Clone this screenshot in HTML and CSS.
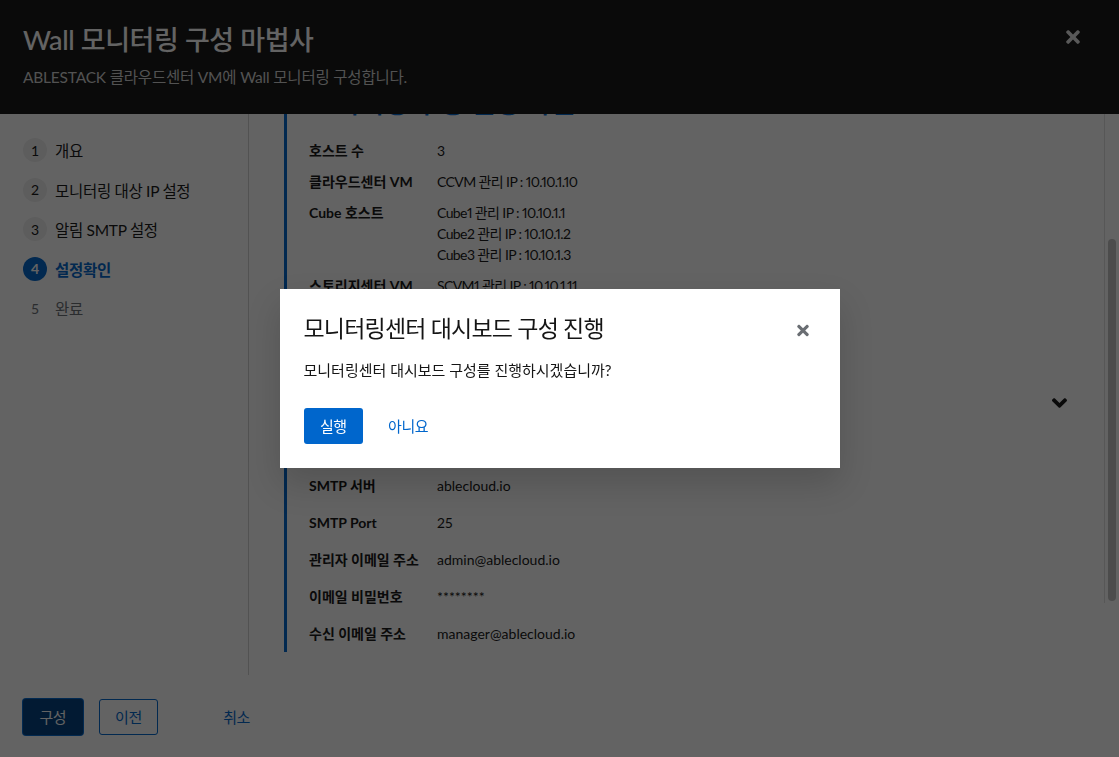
FILE: index.html
```html
<!DOCTYPE html>
<html lang="ko">
<head>
<meta charset="utf-8">
<title>Wall 모니터링 구성 마법사</title>
<link rel="stylesheet" href="styles.css">
</head>
<body>
<div class="wizard">
  <header class="wizard-header">
    <div class="wizard-heading">
      <h1 class="wizard-title">Wall 모니터링 구성 마법사</h1>
      <p class="wizard-desc">ABLESTACK 클라우드센터 VM에 Wall 모니터링 구성합니다.</p>
    </div>
    <button class="wizard-close" aria-label="닫기">
      <svg viewBox="0 0 352 512" width="14" height="20"><path fill="currentColor" d="M242.72 256l100.07-100.07c12.28-12.28 12.28-32.19 0-44.48l-22.24-22.24c-12.28-12.28-32.19-12.28-44.48 0L176 189.28 75.93 89.21c-12.28-12.28-32.19-12.28-44.48 0L9.21 111.45c-12.28 12.28-12.28 32.19 0 44.48L109.28 256 9.21 356.07c-12.28 12.28-12.28 32.19 0 44.48l22.24 22.24c12.28 12.28 32.2 12.28 44.48 0L176 322.72l100.07 100.07c12.28 12.28 32.2 12.28 44.48 0l22.24-22.24c12.28-12.28 12.28-32.19 0-44.48L242.72 256z"/></svg>
    </button>
  </header>

  <div class="wizard-outer">
    <nav class="wizard-nav">
      <ol class="nav-list">
        <li class="nav-item"><span class="nav-num">1</span><span class="nav-text">개요</span></li>
        <li class="nav-item"><span class="nav-num">2</span><span class="nav-text">모니터링 대상 IP 설정</span></li>
        <li class="nav-item"><span class="nav-num">3</span><span class="nav-text">알림 SMTP 설정</span></li>
        <li class="nav-item is-current"><span class="nav-num">4</span><span class="nav-text">설정확인</span></li>
        <li class="nav-item is-disabled"><span class="nav-num">5</span><span class="nav-text">완료</span></li>
      </ol>
    </nav>

    <main class="wizard-main">
      <section class="review">
        <h2 class="review-title">모니터링 구성 설정 확인</h2>
        <dl class="dl dl-compact">
          <dt>호스트 수</dt><dd>3</dd>
          <dt>클라우드센터 VM</dt><dd class="ip">CCVM 관리 IP : 10.10.1.10</dd>
          <dt>Cube 호스트</dt><dd class="ip">Cube1 관리 IP : 10.10.1.1<br>Cube2 관리 IP : 10.10.1.2<br>Cube3 관리 IP : 10.10.1.3</dd>
          <dt>스토리지센터 VM</dt><dd class="ip">SCVM1 관리 IP : 10.10.1.11<br>SCVM2 관리 IP : 10.10.1.12<br>SCVM3 관리 IP : 10.10.1.13</dd>
        </dl>
        <div class="section-toggle">
          <span class="section-toggle-text">알림 SMTP 설정</span>
          <svg class="chevron" viewBox="0 150 320 212" width="15" height="10"><path fill="currentColor" d="M143 352.3L7 216.3c-9.4-9.4-9.4-24.6 0-33.9l22.6-22.6c9.4-9.4 24.6-9.4 33.9 0l96.4 96.4 96.4-96.4c9.4-9.4 24.6-9.4 33.9 0l22.6 22.6c9.4 9.4 9.4 24.6 0 33.9l-136 136c-9.2 9.4-24.4 9.4-33.8 0z"/></svg>
        </div>
        <dl class="dl dl-loose">
          <dt>SMTP 서버</dt><dd>ablecloud.io</dd>
          <dt>SMTP Port</dt><dd>25</dd>
          <dt>관리자 이메일 주소</dt><dd>admin@ablecloud.io</dd>
          <dt>이메일 비밀번호</dt><dd>********</dd>
          <dt>수신 이메일 주소</dt><dd>manager@ablecloud.io</dd>
        </dl>
      </section>
    </main>

    <div class="scrollbar" aria-hidden="true"><div class="scrollbar-thumb"></div></div>
  </div>

  <footer class="wizard-footer">
    <button class="btn btn-primary is-focus">구성</button>
    <button class="btn btn-secondary">이전</button>
    <button class="btn btn-link btn-cancel">취소</button>
  </footer>
</div>

<div class="backdrop">
  <div class="modal" role="dialog" aria-modal="true">
    <div class="modal-header">
      <h2 class="modal-title">모니터링센터 대시보드 구성 진행</h2>
      <button class="modal-close" aria-label="닫기">
        <svg viewBox="0 0 352 512" width="12" height="17"><path fill="currentColor" d="M242.72 256l100.07-100.07c12.28-12.28 12.28-32.19 0-44.48l-22.24-22.24c-12.28-12.28-32.19-12.28-44.48 0L176 189.28 75.93 89.21c-12.28-12.28-32.19-12.28-44.48 0L9.21 111.45c-12.28 12.28-12.28 32.19 0 44.48L109.28 256 9.21 356.070c-12.28 12.28-12.28 32.19 0 44.48l22.24 22.24c12.28 12.28 32.2 12.28 44.48 0L176 322.72l100.07 100.07c12.28 12.28 32.2 12.28 44.48 0l22.24-22.24c12.28-12.28 12.28-32.19 0-44.48L242.72 256z"/></svg>
      </button>
    </div>
    <p class="modal-body">모니터링센터 대시보드 구성를 진행하시겠습니까?</p>
    <div class="modal-footer">
      <button class="btn btn-primary">실행</button>
      <button class="btn btn-link">아니요</button>
    </div>
  </div>
</div>
</body>
</html>
```

FILE: styles.css
```css
* { box-sizing: border-box; }

html, body {
  margin: 0;
  height: 100%;
}

body {
  font-family: "Lato", "Noto Sans CJK KR", sans-serif;
  color: #151515;
  background: #ffffff;
  overflow: hidden;
}

button {
  font-family: inherit;
  cursor: pointer;
}

/* ---------- wizard ---------- */
.wizard {
  display: flex;
  flex-direction: column;
  height: 100vh;
}

.wizard-header {
  flex: none;
  height: 114px;
  background: #151515;
  padding: 24px 39px 0 23px;
  display: flex;
  justify-content: space-between;
  align-items: flex-start;
}

.wizard-title {
  margin: 0;
  font-size: 27px;
  line-height: 32px;
  font-weight: 500;
  letter-spacing: -0.4px;
  color: #ffffff;
}

.wizard-desc {
  margin: 10px 0 0;
  font-size: 15.5px;
  line-height: 22px;
  letter-spacing: -0.2px;
  color: #d2d2d2;
}

.wizard-close {
  margin-top: 3px;
  padding: 0;
  border: 0;
  background: none;
  color: #e4e4e4;
  display: flex;
}

.wizard-outer {
  flex: 1;
  min-height: 0;
  display: flex;
  position: relative;
}

/* nav */
.wizard-nav {
  flex: none;
  width: 249px;
  border-right: 1px solid #d2d2d2;
  padding: 24px 16px 0 23px;
}

.nav-list {
  list-style: none;
  margin: 0;
  padding: 0;
  display: flex;
  flex-direction: column;
  gap: 15.5px;
}

.nav-item {
  display: flex;
  align-items: center;
  gap: 8px;
  height: 24px;
  font-size: 15.5px;
  letter-spacing: -0.3px;
  color: #151515;
}

.nav-num {
  width: 24px;
  height: 24px;
  border-radius: 50%;
  background: #f0f0f0;
  display: flex;
  align-items: center;
  justify-content: center;
  font-size: 14px;
  font-weight: 400;
  letter-spacing: 0;
  color: #151515;
}

.nav-item.is-current {
  color: #0066cc;
  font-weight: 700;
}

.nav-item.is-current .nav-num {
  background: #0066cc;
  color: #ffffff;
  font-weight: 700;
}

.nav-item.is-disabled {
  color: #6a6e73;
}

.nav-item.is-disabled .nav-num {
  background: transparent;
  color: #6a6e73;
}

/* main */
.wizard-main {
  flex: 1;
  min-width: 0;
  overflow: hidden;
  padding: 0 52px 0 35px;
}

.review {
  border-left: 3px solid #0066cc;
  padding: 0 0 8px 22px;
}

.review-title {
  margin: -30px 0 0;
  height: 36px;
  font-size: 28px;
  line-height: 36px;
  font-weight: 500;
  letter-spacing: -1px;
  color: #0066cc;
}

.dl {
  display: grid;
  grid-template-columns: 128px 1fr;
  margin: 0;
  line-height: 21px;
}

.dl dt {
  font-size: 14px;
  font-weight: 700;
  letter-spacing: 0;
  color: #151515;
}

.dl dd {
  margin: 0;
  font-size: 14px;
  color: #151515;
  font-variant-numeric: proportional-nums;
}

.dl dd.ip {
  letter-spacing: -0.6px;
}

.dl-compact {
  margin-top: 19.5px;
  row-gap: 10px;
}

.dl-loose {
  margin-top: 55.5px;
  row-gap: 16px;
}

.section-toggle {
  margin-top: 49.5px;
  height: 32px;
  display: flex;
  align-items: center;
  justify-content: space-between;
  font-size: 15px;
  font-weight: 700;
  letter-spacing: -0.5px;
}

.chevron {
  color: #151515;
  display: block;
}

/* decorative overlay scrollbar */
.scrollbar {
  position: absolute;
  left: 1104px;
  top: 0;
  width: 15px;
  height: 489px;
  border-left: 1px solid #e0e0e0;
}

.scrollbar-thumb {
  position: absolute;
  left: 3px;
  top: 125px;
  width: 8px;
  height: 362px;
  border-radius: 4px;
  background: #c3c3c3;
}

/* footer */
.wizard-footer {
  flex: none;
  height: 82px;
  padding: 24px 23px;
  display: flex;
  align-items: flex-start;
}

/* ---------- buttons ---------- */
.btn {
  height: 36px;
  padding: 0 15.5px;
  border: 1px solid transparent;
  border-radius: 3px;
  font-size: 15px;
  letter-spacing: -0.5px;
  line-height: 34px;
  background: transparent;
}

.btn-primary {
  background: #0066cc;
  color: #ffffff;
}

.btn-primary.is-focus {
  background: #004080;
  box-shadow: 0 0 0 1px #0066cc;
}

.btn-secondary {
  margin-left: 16px;
  border-color: #0066cc;
  color: #0066cc;
}

.btn-link {
  color: #0066cc;
  padding: 0 16px;
}

.btn-cancel {
  margin-left: 48px;
}

/* ---------- modal ---------- */
.backdrop {
  position: fixed;
  inset: 0;
  background: rgba(3, 3, 3, 0.62);
  display: flex;
  align-items: center;
  justify-content: center;
}

.modal {
  width: 560px;
  background: #ffffff;
  box-shadow: 0 16px 32px rgba(3, 3, 3, 0.16);
  padding: 24px;
}

.modal-header {
  display: flex;
  justify-content: space-between;
  align-items: center;
}

.modal-title {
  margin: 0;
  font-size: 23px;
  line-height: 31px;
  font-weight: 400;
  letter-spacing: -0.8px;
  color: #151515;
}

.modal-close {
  margin-right: 7px;
  margin-top: 3px;
  padding: 0;
  border: 0;
  background: none;
  color: #6a6e73;
  display: flex;
}

.modal-body {
  margin: 14px 0 0;
  font-size: 15px;
  line-height: 24px;
  letter-spacing: 0;
  color: #151515;
}

.modal-footer {
  margin-top: 26px;
  display: flex;
  gap: 8px;
}
```
